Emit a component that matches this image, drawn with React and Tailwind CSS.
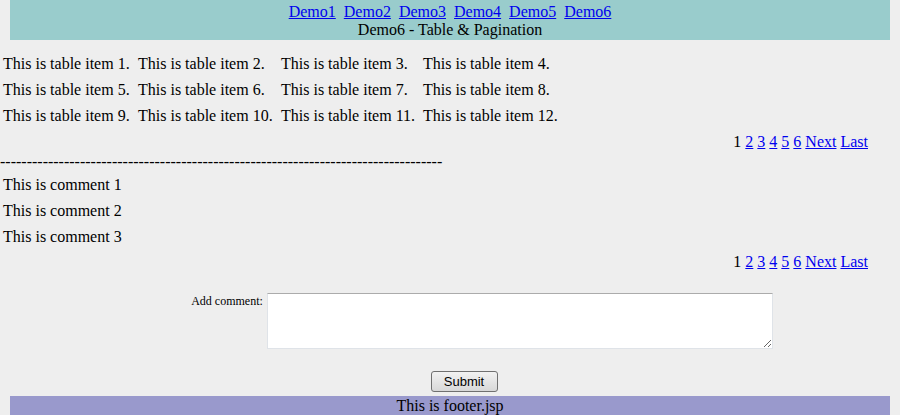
const demos = ['Demo1', 'Demo2', 'Demo3', 'Demo4', 'Demo5', 'Demo6'];
const items = [1, 2, 3, 4, 5, 6, 7, 8, 9, 10, 11, 12];
const comments = ['This is comment 1', 'This is comment 2', 'This is comment 3'];

const Pager = ({ className = '' }) => (
  <div className={`flex h-[26px] items-center justify-end pr-[32px] ${className}`}>
    <span>1</span>
    {['2', '3', '4', '5', '6', 'Next', 'Last'].map((p) => (
      <a key={p} href="#" className="ml-[4px] text-[#0000ee] underline">
        {p}
      </a>
    ))}
  </div>
);

const App = () => {
  return (
    <div className="min-h-[415px] bg-[#eeeeee] font-['Liberation_Serif',serif] text-[16px] leading-[18px] text-black">
      <div className="mx-[10px] flex h-[40px] flex-col items-center bg-[#99cccc] pt-[3px]">
        <div className="flex gap-[8px]">
          {demos.map((d) => (
            <a key={d} href="#" className="text-[#0000ee] underline">
              {d}
            </a>
          ))}
        </div>
        <div>Demo6 - Table &amp; Pagination</div>
      </div>

      <div className="mt-[11px] grid grid-cols-[135px_143px_142px_1fr]">
        {items.map((i) => (
          <div key={i} className="flex h-[26px] items-center pl-[3px]">
            This is table item {i}.
          </div>
        ))}
      </div>

      <Pager />

      <div className="mt-[-2px] h-[18px] overflow-hidden whitespace-nowrap">
        {'-'.repeat(83)}
      </div>

      <div className="mt-[1px]">
        {comments.map((c) => (
          <div key={c} className="flex h-[26px] items-center pl-[3px]">
            {c}
          </div>
        ))}
      </div>

      <Pager className="mt-[-1px]" />

      <div className="mt-[18px] flex justify-center pl-[64px]">
        <label className="mr-[4px] pt-[1px] text-[12px] leading-[14px]">Add comment:</label>
        <textarea className="h-[56px] w-[506px] resize-y border border-[#dfe3e8] border-t-[#ababab] bg-white"></textarea>
      </div>

      <div className="mt-[22px] flex justify-center pl-[28px]">
        <button className="h-[21px] w-[67px] rounded-[3px] border border-[#707070] bg-gradient-to-b from-[#f2f2f2] to-[#d8d8d8] font-['Liberation_Sans',sans-serif] text-[13px] leading-[16px] text-black">
          Submit
        </button>
      </div>

      <div className="mx-[10px] mt-[4px] flex h-[19px] items-center justify-center bg-[#9999cc]">
        This is footer.jsp
      </div>
    </div>
  );
};

export default App;
